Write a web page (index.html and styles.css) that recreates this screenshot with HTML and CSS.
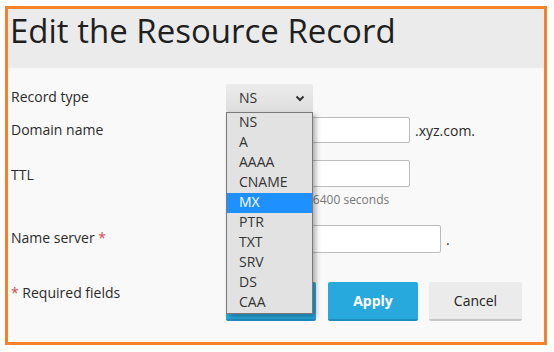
FILE: index.html
```html
<!DOCTYPE html>
<html lang="en">
<head>
  <meta charset="UTF-8">
  <title>Edit the Resource Record</title>
  <link rel="stylesheet" href="styles.css">
</head>
<body>
  <div class="frame">
    <div class="page-head">
      <h1>Edit the Resource Record</h1>
    </div>
    <div class="form">
      <div class="row row-type">
        <label class="label">Record type</label>
        <div class="field">
          <div class="select">
            <span>NS</span>
            <svg class="chevron" width="10" height="7" viewBox="0 0 10 7">
              <polyline points="1.5,1.5 5,5 8.5,1.5" fill="none" stroke="#333" stroke-width="2"/>
            </svg>
            <ul class="options">
              <li>NS</li>
              <li>A</li>
              <li>AAAA</li>
              <li>CNAME</li>
              <li class="active">MX</li>
              <li>PTR</li>
              <li>TXT</li>
              <li>SRV</li>
              <li>DS</li>
              <li>CAA</li>
            </ul>
          </div>
        </div>
      </div>
      <div class="row row-domain">
        <label class="label">Domain name</label>
        <div class="field">
          <input type="text" class="input">
          <span class="suffix">.xyz.com.</span>
        </div>
      </div>
      <div class="row row-ttl">
        <label class="label">TTL</label>
        <div class="field field-col">
          <input type="text" class="input input-ttl">
          <span class="hint">Default value: 86400 seconds</span>
        </div>
      </div>
      <div class="row row-ns">
        <label class="label">Name server <span class="req">*</span></label>
        <div class="field">
          <input type="text" class="input input-wide">
          <span class="suffix">.</span>
        </div>
      </div>
      <div class="row row-actions">
        <div class="label"><span class="req">*</span> Required fields</div>
        <div class="buttons">
          <button class="btn btn-primary btn-ok">OK</button>
          <button class="btn btn-primary">Apply</button>
          <button class="btn btn-default">Cancel</button>
        </div>
      </div>
    </div>
  </div>
</body>
</html>
```

FILE: styles.css
```css
body {
  margin: 0;
  padding: 6px 0 0 5px;
  background: #fff;
  font-family: 'Open Sans', 'DejaVu Sans', sans-serif;
  color: #2b2b2b;
}
.frame {
  width: 536px;
  height: 333px;
  border: 3px solid #f7822b;
  background: #f9f9f9;
}
.page-head {
  height: 59px;
  box-sizing: border-box;
  padding: 2px 0 0 2px;
  background: #ebebeb;
}
h1 {
  margin: 0;
  font-size: 33px;
  line-height: 40px;
  font-weight: 400;
  color: #1f1f1f;
}
.form {
  padding: 16px 0 0 3px;
  font-size: 14px;
}
.row {
  display: flex;
}
.label {
  width: 215px;
  flex: none;
  line-height: 20px;
  padding-top: 3px;
}
.req {
  color: #d04a3f;
}
.field {
  display: flex;
  align-items: center;
}
.field-col {
  flex-direction: column;
  align-items: flex-start;
}
.row-type { margin-bottom: 5px; }
.row-domain { margin-bottom: 17px; }
.row-ttl { margin-bottom: 17px; }
.row-ttl .label { padding-top: 5px; }
.row-ns { margin-bottom: 29px; }
.row-actions .label { padding-top: 1px; }

.select {
  position: relative;
  width: 87px;
  height: 28px;
  box-sizing: border-box;
  padding-left: 13px;
  border-radius: 2px;
  background: linear-gradient(#ececec, #dedede);
  line-height: 28px;
  color: #333;
}
.chevron {
  position: absolute;
  right: 8px;
  top: 11px;
}
.options {
  position: absolute;
  top: 28px;
  left: 0;
  width: 87px;
  box-sizing: border-box;
  margin: 0;
  padding: 0;
  list-style: none;
  border: 1px solid #7a7a7a;
  background: #e2e2e2;
  box-shadow: 3px 3px 5px rgba(0, 0, 0, 0.3);
  z-index: 10;
}
.options li {
  height: 20px;
  line-height: 18px;
  padding-left: 12px;
  color: #333;
}
.options li.active {
  background: #1e90ff;
  color: #fff;
}
.input {
  width: 184px;
  height: 26px;
  box-sizing: border-box;
  margin: 0;
  border: 1px solid #bdbdbd;
  border-radius: 2px;
  background: #fff;
}
.input-ttl {
  height: 27px;
}
.input-wide {
  width: 215px;
  height: 28px;
}
.suffix {
  margin-left: 5px;
}
.hint {
  margin-top: 5px;
  font-size: 12px;
  line-height: 16px;
  color: #777;
}
.buttons {
  display: flex;
}
.btn {
  height: 39px;
  box-sizing: border-box;
  margin: 0 11px 0 0;
  padding: 0 24px;
  border: none;
  border-radius: 2px;
  font-family: 'Open Sans', sans-serif;
  font-size: 14px;
}
.btn-primary {
  width: 90px;
  background: #28a9de;
  border-bottom: 2px solid #1f8dbd;
  color: #fff;
  font-weight: 700;
}
.btn-ok {
  margin-right: 12px;
}
.btn-default {
  width: 93px;
  background: #ebebeb;
  border-bottom: 2px solid #c8c8c8;
  color: #222;
}
```
